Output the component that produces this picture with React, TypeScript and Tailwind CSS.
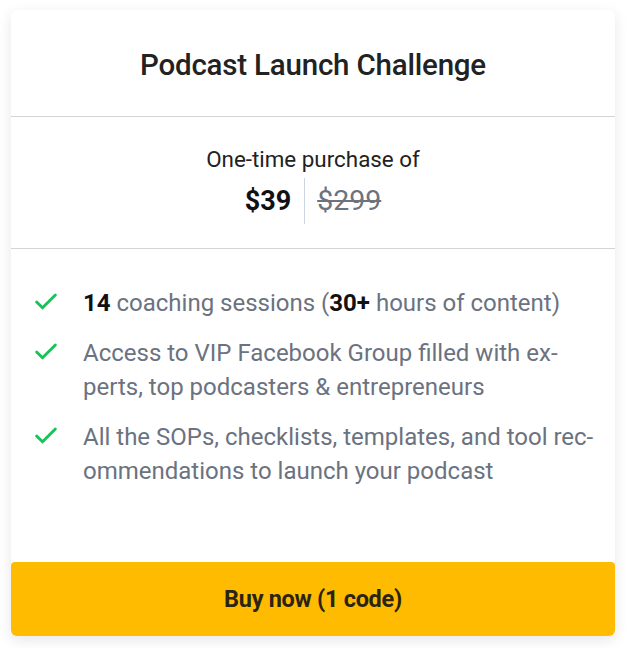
import React from 'react';
import { Check } from 'lucide-react';

const features: React.ReactNode[] = [
  <>
    <b className="font-bold text-[#111]">14</b> coaching sessions (<b className="font-bold text-[#111]">30+</b> hours of content)
  </>,
  <>
    Access to VIP Facebook Group filled with ex-
    <br />
    perts, top podcasters &amp; entrepreneurs
  </>,
  <>
    All the SOPs, checklists, templates, and tool rec-
    <br />
    ommendations to launch your podcast
  </>,
];

const App: React.FC = () => {
  return (
    <div className="min-h-[648px] bg-white pt-[10px] pl-[11px] font-['Roboto',sans-serif]">
      <div className="w-[604px] h-[626px] flex flex-col bg-white rounded-md shadow-[0_4px_14px_rgba(0,0,0,0.10)]">
        <div className="h-[107px] flex items-center justify-center border-b border-[#d4d4d8]">
          <h2 className="text-[29.5px] font-medium text-[#222] tracking-[-0.2px] pt-[4px]">
            Podcast Launch Challenge
          </h2>
        </div>

        <div className="h-[132px] flex flex-col items-center justify-center border-b border-[#d4d4d8]">
          <p className="text-[22.4px] text-[#222] leading-[30px] mt-[2px]">One-time purchase of</p>
          <div className="flex items-center mt-[4px]">
            <span className="text-[27px] font-bold text-[#111] pr-[13px] leading-[46px]">$39</span>
            <span className="w-px h-[46px] bg-[#cbd5e1]" />
            <span className="text-[28.5px] text-[#6b7280] line-through pl-[12px] leading-[46px]">$299</span>
          </div>
        </div>

        <ul className="flex-1 pt-[37px] pl-[21px] pr-4 flex flex-col gap-[16px]">
          {features.map((f, i) => (
            <li key={i} className="flex items-start">
              <Check className="w-[28px] h-[28px] text-[#16c45a] mt-[2px] shrink-0" strokeWidth={2.5} />
              <span className="ml-[23px] text-[24px] leading-[34px] text-[#6b7280] tracking-[0px]">{f}</span>
            </li>
          ))}
        </ul>

        <button className="h-[74px] w-full bg-[#ffbb00] rounded-b-md rounded-t-[4px] flex items-center justify-center">
          <span className="text-[23.5px] font-bold text-[#2b2414] tracking-[-0.3px] pt-[2px]">Buy now (1 code)</span>
        </button>
      </div>
    </div>
  );
};

export default App;
